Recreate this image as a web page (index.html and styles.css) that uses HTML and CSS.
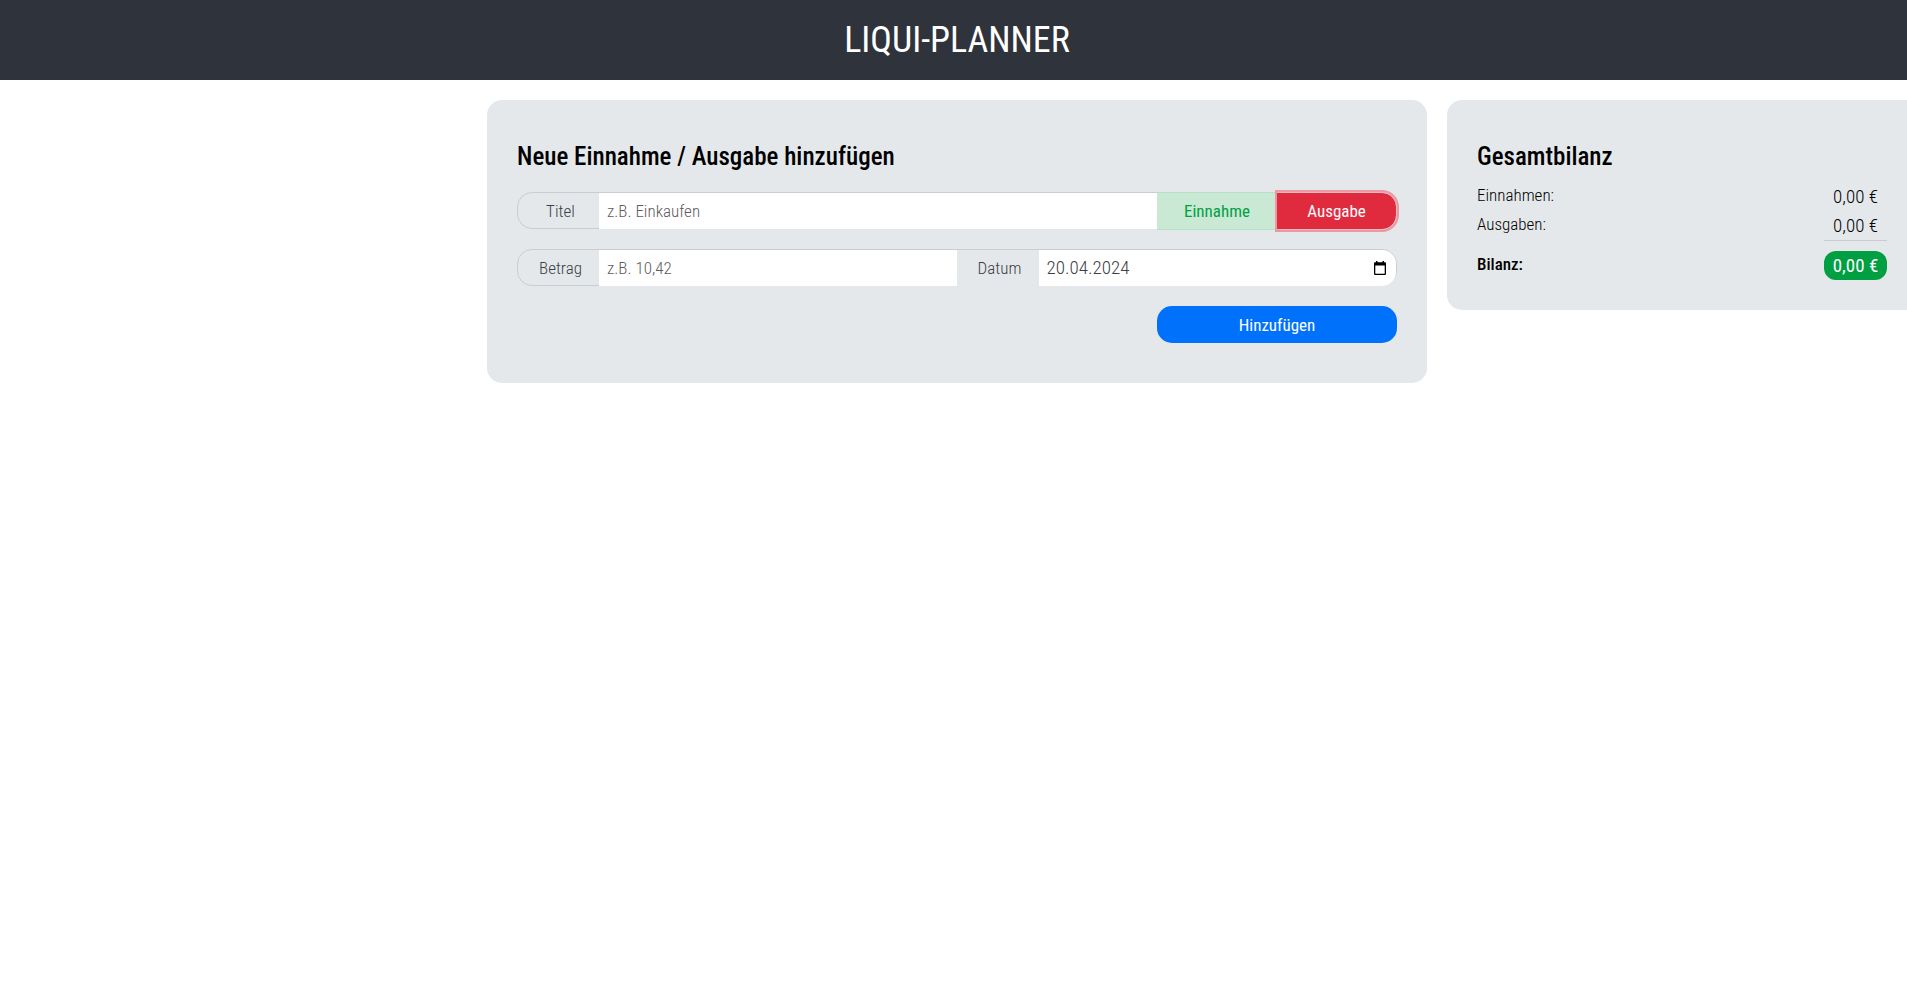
FILE: index.html
```html
<!DOCTYPE html>
<html lang="de">
<head>
<meta charset="utf-8">
<title>Liqui-Planner</title>
<link rel="stylesheet" href="styles.css">
</head>
<body>
<header class="topbar"><span class="brand">LIQUI-PLANNER</span></header>
<main class="layout">
  <section class="card entry">
    <h1 class="card-title">Neue Einnahme / Ausgabe hinzufügen</h1>
    <form class="form">
      <div class="group group-title">
        <label class="tag" for="titel">Titel</label>
        <input class="field" id="titel" type="text" placeholder="z.B. Einkaufen">
        <div class="types">
          <button class="type income" type="button">Einnahme</button>
          <button class="type expense" type="button">Ausgabe</button>
        </div>
      </div>
      <div class="group group-amount">
        <label class="tag" for="betrag">Betrag</label>
        <input class="field" id="betrag" type="text" placeholder="z.B. 10,42">
        <label class="tag tag-inner" for="datum">Datum</label>
        <div class="date">
          <input class="field date-field" id="datum" type="text" value="20.04.2024">
          <button class="picker" type="button" aria-label="Kalender öffnen">
            <svg width="12" height="14" viewBox="0 0 12 14"><path fill="#000" fill-rule="evenodd" d="M2 0h1.500v1.200h5V0H10v1.200h1q1 0 1 1V13q0 1-1 1H1q-1 0-1-1V2.200q0-1 1-1h1zM1.300 4.600v8.100h9.400V4.600z"/></svg>
          </button>
        </div>
      </div>
      <button class="submit" type="submit">Hinzufügen</button>
    </form>
  </section>
  <aside class="card balance">
    <h2 class="card-title">Gesamtbilanz</h2>
    <dl class="totals">
      <div class="row"><dt>Einnahmen:</dt><dd>0,00 €</dd></div>
      <div class="row"><dt>Ausgaben:</dt><dd class="last">0,00 €</dd></div>
      <div class="row sum"><dt>Bilanz:</dt><dd class="badge">0,00 €</dd></div>
    </dl>
  </aside>
</main>
</body>
</html>
```
FILE: styles.css
```css
* { box-sizing: border-box; }
html { overflow: hidden; }
body {
  margin: 0;
  background: #fff;
  color: #000;
  font: 300 17px/26px "Roboto Condensed", Roboto, "Liberation Sans", sans-serif;
}
button, input { font: inherit; color: inherit; margin: 0; border: 0; }

.topbar {
  display: flex;
  align-items: center;
  justify-content: center;
  height: 80px;
  margin-right: -7px;
  background: #2f333b;
  color: #fff;
}
.brand { font-size: 36px; line-height: 48px; font-weight: 400; }

.layout {
  display: grid;
  grid-template-columns: 1fr 2fr 1fr;
  gap: 20px;
  align-items: start;
  margin: 20px -10px 0 -3px;
}
.card { padding: 40px 30px 30px; border-radius: 15px; background: #e4e8eb; }
.entry { grid-column: 2; padding-bottom: 40px; }
.balance { margin-right: -20px; padding-right: 50px; }
.card-title { margin: 0; font-size: 25px; line-height: 34px; font-weight: 500; }

.form { display: flex; flex-direction: column; gap: 20px; margin-top: 18px; }
.group {
  display: grid;
  height: 37px;
  border: 1px solid #c7cdd2;
  border-radius: 15px;
  color: #3b4046;
}
.group-title { grid-template-columns: 81px 1fr 239px; }
.group-amount { grid-template-columns: 81px 1fr 82px 1fr; }
.tag { padding-left: 4px; text-align: center; line-height: 36px; }
.tag-inner { background: #e4e8eb; }
.field { width: 100%; min-width: 0; padding: 0 8px; background: #fff; outline: 0; }
.field::placeholder { color: #5c5c5c; opacity: 1; }

.types { display: grid; grid-template-columns: 1fr 1fr; margin: -1px -1px -1px 0; }
.type { font-weight: 400; }
.income { background: #cae9d5; color: #009f42; border: solid #b5e2c5; border-width: 1px 0; }
.expense {
  background: #e02b3f;
  background-clip: padding-box;
  color: #fff;
  border: solid #efb9c0;
  border-width: 1px 1px 1px 0;
  border-radius: 0 15px 15px 0;
  box-shadow: 0 0 0 2px #e899a3;
}

.date { display: flex; background: #fff; border-radius: 0 14px 14px 0; }
.date-field { flex: 1; font-size: 19px; }
.picker { display: flex; align-items: center; padding: 0 10px; background: none; }
.submit {
  align-self: flex-end;
  width: 240px;
  height: 37px;
  border-radius: 15px;
  background: #0071fa;
  color: #fff;
  font-weight: 400;
}

.totals { margin: 8px 0 0; }
.row { display: flex; justify-content: space-between; }
.row dd { min-width: 63px; height: 29px; margin: 0; font-size: 19px; line-height: 30px; text-align: center; }
.row .last { height: 30px; border-bottom: 1px solid #c7cdd2; }
.sum { margin-top: 10px; }
.sum dt { font-weight: 500; }
.row .badge { border-radius: 12px; background: #009f42; color: #fff; font-weight: 400; }
```
